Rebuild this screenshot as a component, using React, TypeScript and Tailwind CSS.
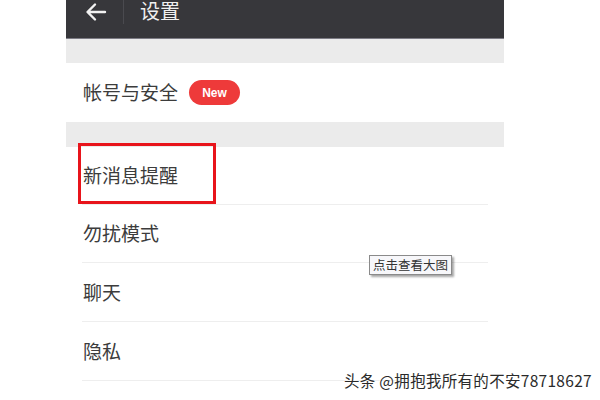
import React from "react";

const font = { fontFamily: '"Noto Sans CJK SC", "Noto Sans", sans-serif' };

function Row({ label, h }: { label: string; h: string }) {
  return (
    <div className={`flex flex-col ${h}`}>
      <div className="flex flex-1 items-center pl-[17px] text-[19px] text-[#3c3c3c]">{label}</div>
      <div className="mx-[16px] h-px bg-[#eeeeee]" />
    </div>
  );
}

export default function App() {
  return (
    <div className="relative h-[400px] w-[600px] overflow-hidden bg-white" style={font}>
      <div className="ml-[66px] flex w-[438px] flex-col">
        <div className="flex h-[39px] items-start border-b border-[#7c7b84] bg-[#37373b]">
          <div className="flex h-[24px] w-[58px] items-center justify-center border-r border-[#4a4a4f]">
            <svg width="22" height="20" viewBox="0 0 22 20" className="ml-[2px]">
              <path d="M20 10H3M10 2.5L2.5 10L10 17.5" stroke="#f2f2f2" strokeWidth="2.4" fill="none" strokeLinecap="round" strokeLinejoin="round" />
            </svg>
          </div>
          <div className="ml-[16px] text-[20px] leading-[21px] text-[#f0f0f0]">设置</div>
        </div>
        <div className="h-[24px] bg-[#ebebeb]" />
        <div className="flex h-[59px] items-center gap-[11px] pl-[17px]">
          <span className="text-[19px] text-[#3c3c3c]">帐号与安全</span>
          <span className="flex h-[25px] w-[51px] items-center justify-center rounded-full bg-[#ee3a3a] text-[12px] font-bold text-white" style={{ fontFamily: '"Liberation Sans", Arial, sans-serif' }}>
            New
          </span>
        </div>
        <div className="h-[25px] bg-[#ebebeb]" />
        <Row label="新消息提醒" h="h-[58px]" />
        <Row label="勿扰模式" h="h-[58px]" />
        <Row label="聊天" h="h-[59px]" />
        <Row label="隐私" h="h-[59px]" />
      </div>

      <div className="absolute left-[78px] top-[143px] h-[61px] w-[138px] border-[3px] border-[#e8141b]" />

      <div className="absolute left-[369px] top-[255px] flex h-[20px] w-[83px] items-center justify-center border border-[#8a8a8a] bg-[#f7f7fa] text-[12.5px] leading-none text-[#333] shadow-[2px_2px_2px_rgba(0,0,0,0.35)]">
        点击查看大图
      </div>

      <div className="absolute left-[344px] top-[370px] text-[15.5px] leading-[20px] tracking-[0.3px] text-[#2a2a2a] [text-shadow:0_0_2px_#fff,0_0_2px_#fff]">
        头条 @拥抱我所有的不安78718627
      </div>
    </div>
  );
}
